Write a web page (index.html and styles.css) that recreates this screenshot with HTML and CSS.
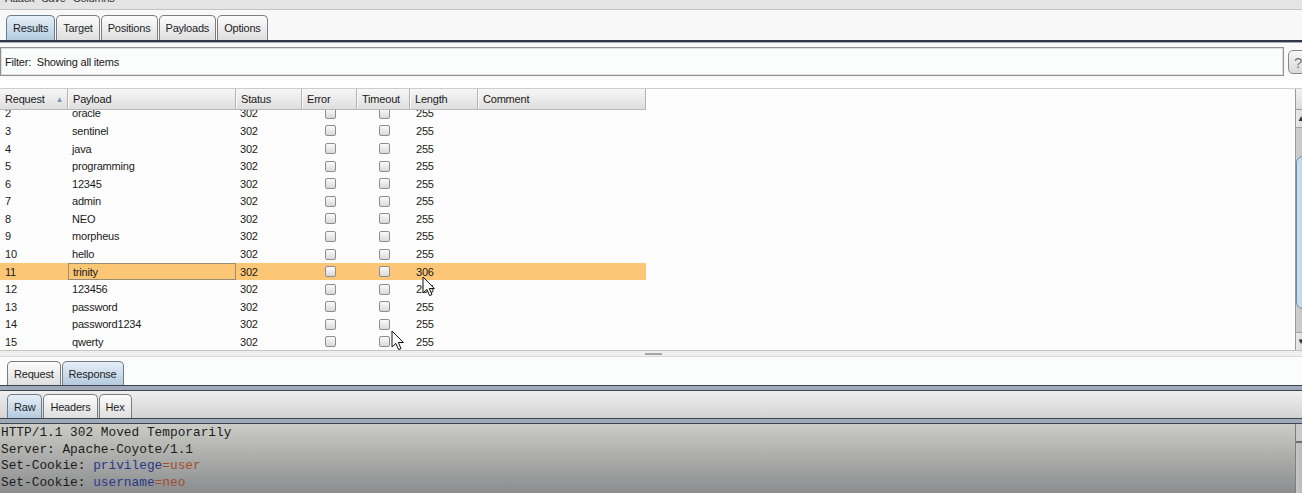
FILE: index.html
```html
<!DOCTYPE html>
<html>
<head>
<meta charset="utf-8">
<title>Intruder attack</title>
<link rel="stylesheet" href="styles.css">
</head>
<body>
<div class="app">
  <div class="menubar">
    <div class="menu-items"><span>Attack</span><span>Save</span><span>Columns</span></div>
  </div>
  <div class="tabbar top">
    <div class="tab sel">Results</div>
    <div class="tab">Target</div>
    <div class="tab">Positions</div>
    <div class="tab">Payloads</div>
    <div class="tab">Options</div>
  </div>
  <div class="sep-top"></div>
  <div class="filterrow">
    <div class="filterbox">Filter:&nbsp; Showing all items</div>
    <div class="help">?</div>
  </div>
  <div class="tablearea">
    <div class="table">
      <div class="thead">
        <div class="th">Request <span class="sort">&#9650;</span></div>
        <div class="th">Payload</div>
        <div class="th">Status</div>
        <div class="th">Error</div>
        <div class="th">Timeout</div>
        <div class="th">Length</div>
        <div class="th">Comment</div>
      </div>
      <div class="tbody">
        <div class="rows">
          <div class="row"><span>2</span><span>oracle</span><span>302</span><span class="cb"><i></i></span><span class="cb"><i></i></span><span>255</span><span></span></div>
          <div class="row"><span>3</span><span>sentinel</span><span>302</span><span class="cb"><i></i></span><span class="cb"><i></i></span><span>255</span><span></span></div>
          <div class="row"><span>4</span><span>java</span><span>302</span><span class="cb"><i></i></span><span class="cb"><i></i></span><span>255</span><span></span></div>
          <div class="row"><span>5</span><span>programming</span><span>302</span><span class="cb"><i></i></span><span class="cb"><i></i></span><span>255</span><span></span></div>
          <div class="row"><span>6</span><span>12345</span><span>302</span><span class="cb"><i></i></span><span class="cb"><i></i></span><span>255</span><span></span></div>
          <div class="row"><span>7</span><span>admin</span><span>302</span><span class="cb"><i></i></span><span class="cb"><i></i></span><span>255</span><span></span></div>
          <div class="row"><span>8</span><span>NEO</span><span>302</span><span class="cb"><i></i></span><span class="cb"><i></i></span><span>255</span><span></span></div>
          <div class="row"><span>9</span><span>morpheus</span><span>302</span><span class="cb"><i></i></span><span class="cb"><i></i></span><span>255</span><span></span></div>
          <div class="row"><span>10</span><span>hello</span><span>302</span><span class="cb"><i></i></span><span class="cb"><i></i></span><span>255</span><span></span></div>
          <div class="row selected"><span>11</span><span class="focus">trinity</span><span>302</span><span class="cb"><i></i></span><span class="cb"><i></i></span><span>306</span><span></span></div>
          <div class="row"><span>12</span><span>123456</span><span>302</span><span class="cb"><i></i></span><span class="cb"><i></i></span><span>255</span><span></span></div>
          <div class="row"><span>13</span><span>password</span><span>302</span><span class="cb"><i></i></span><span class="cb"><i></i></span><span>255</span><span></span></div>
          <div class="row"><span>14</span><span>password1234</span><span>302</span><span class="cb"><i></i></span><span class="cb"><i></i></span><span>255</span><span></span></div>
          <div class="row"><span>15</span><span>qwerty</span><span>302</span><span class="cb"><i></i></span><span class="cb"><i></i></span><span>255</span><span></span></div>
        </div>
      </div>
    </div>
    <div class="vscroll">
      <div class="vs-corner"></div>
      <div class="vs-btn up">&#9650;</div>
      <div class="vs-track"><div class="vs-thumb"></div></div>
      <div class="vs-btn down">&#9660;</div>
    </div>
  </div>
  <div class="splitter"><div class="grip"></div></div>
  <div class="tabbar sub light">
    <div class="tab">Request</div>
    <div class="tab sel">Response</div>
  </div>
  <div class="sep-dbl"></div>
  <div class="tabbar sub grey">
    <div class="tab sel">Raw</div>
    <div class="tab">Headers</div>
    <div class="tab">Hex</div>
  </div>
  <div class="sep-dbl"></div>
  <div class="textarea">
<pre class="raw">HTTP/1.1 302 Moved Temporarily
Server: Apache-Coyote/1.1
Set-Cookie: <span class="k">privilege</span><span class="v">=user</span>
Set-Cookie: <span class="k">username</span><span class="v">=neo</span></pre>
    <div class="vscroll2"><div class="vs2-btn"></div></div>
  </div>

  <svg class="cursor c1" width="14" height="21" viewBox="0 0 14 21"><path d="M1 1 L1 17 L4.8 13.4 L7.6 19.6 L10 18.6 L7.3 12.5 L12.4 12.5 Z" fill="#fff" stroke="#111" stroke-width="1" stroke-linejoin="round"/></svg>
  <svg class="cursor c2" width="14" height="21" viewBox="0 0 14 21"><path d="M1 1 L1 17 L4.8 13.4 L7.6 19.6 L10 18.6 L7.3 12.5 L12.4 12.5 Z" fill="#fff" stroke="#111" stroke-width="1" stroke-linejoin="round"/></svg>
</div>
</body>
</html>
```

FILE: styles.css
```css
* { box-sizing: border-box; }
html, body { margin: 0; padding: 0; overflow: hidden; background: #fff; }
body { width: 1302px; height: 493px; }

.app {
  position: relative;
  width: 1312px;
  height: 493px;
  overflow: hidden;
  display: flex;
  flex-direction: column;
  font-family: "Liberation Sans", Arial, sans-serif;
  font-size: 11px;
  letter-spacing: -0.2px;
  color: #1a1a1a;
}

/* menu bar (clipped at top) */
.menubar {
  height: 10px;
  flex: none;
  background: #e4e4e4;
  border-bottom: 1px solid #c4c4c4;
  overflow: hidden;
}
.menu-items {
  display: flex;
  gap: 7px;
  padding-left: 5px;
  line-height: 12px;
  margin-top: -8px;
  color: #333;
}

/* tab bars */
.tabbar {
  flex: none;
  display: flex;
  align-items: flex-end;
  gap: 1px;
}
.tabbar.top { height: 30px; padding-left: 6px; background: #f8f8f8; }
.tabbar.sub.light { height: 28px; padding-left: 7px; background: #fbfcfc; }
.tabbar.sub.grey { height: 27px; padding-left: 7px; background: linear-gradient(#efefef, #d3d3d3); }

.tab {
  height: 25px;
  padding: 0 6px;
  display: flex;
  align-items: center;
  border: 1px solid #7d7d7d;
  border-bottom: 0;
  border-radius: 5px 5px 0 0;
  background: linear-gradient(#fcfcfc, #dedede);
  color: #1f1f1f;
  white-space: nowrap;
}
.tabbar.sub .tab { height: 24px; }
.tab.sel { background: linear-gradient(#e6eff7, #b3cbdf); border-color: #6f7d8a; }

.sep-top {
  flex: none;
  height: 3px;
  border-top: 2px solid #2f3848;
  background: #a7acb4;
}
.sep-dbl {
  flex: none;
  height: 6px;
  border-top: 1px solid #3d4452;
  border-bottom: 1px solid #3d4452;
  background: #a0a9b8;
}

/* filter */
.filterrow {
  flex: none;
  height: 37px;
  padding-top: 4px;
  display: flex;
  align-items: flex-start;
  gap: 4px;
  background: #fafafa;
}
.filterbox {
  flex: 1;
  height: 29px;
  border: 1px solid #8f8f8f;
  box-shadow: inset 0 0 0 1px #dedede;
  background: #fbfcfc;
  padding-left: 4px;
  display: flex;
  align-items: center;
}
.help {
  width: 24px;
  height: 24px;
  margin-top: 3px;
  border: 1px solid #8a8a8a;
  border-radius: 5px;
  background: linear-gradient(#f7f7f7, #d9d9d9);
  color: #777;
  font-size: 15px;
  padding-left: 5px;
  display: flex;
  align-items: center;
}

/* table */
.tablearea {
  flex: none;
  margin-top: 8px;
  height: 262px;
  display: flex;
  border-top: 1px solid #cdcdcd;
  background: #fdfdfd;
}
.table { flex: 1; display: flex; flex-direction: column; min-width: 0; }
.thead, .row {
  display: grid;
  grid-template-columns: 68px 168px 66px 55px 53px 68px 168px;
  width: 646px;
}
.thead {
  height: 21px;
  flex: none;
  background: linear-gradient(#f7f7f7, #dedede);
  border-bottom: 1px solid #b9b9b9;
}
.th {
  display: flex;
  align-items: center;
  padding-left: 4px;
  border-right: 1px solid #b3b3b3;
  border-left: 1px solid #fafafa;
  white-space: nowrap;
}
.th:first-child { padding-left: 5px; border-left: 0; }
.sort { color: #7e98b3; font-size: 8px; margin-left: 11px; }
.tbody { height: 240px; overflow: hidden; flex: none; }
.rows { margin-top: -5.4px; }
.row { height: 17.58px; align-items: center; }
.row > span { padding-left: 4px; white-space: nowrap; height: 100%; display: flex; align-items: center; }
.row > span:first-child { padding-left: 5px; }
.row > span:nth-child(6) { padding-left: 6px; }
.row .cb { justify-content: center; padding-left: 1px; }
.cb i {
  display: block;
  width: 11px;
  height: 11px;
  border: 1px solid #8e8e8e;
  border-radius: 2px;
  background: linear-gradient(#fbfbfb, #d9d9d9);
}
.row.selected { background: #fbc776; }
.row .focus { border: 1px solid #9c8c73; }

/* scrollbar */
.vscroll { width: 17px; flex: none; display: flex; flex-direction: column; background: #dcdcdc; border-left: 1px solid #9a9a9a; }
.vs-corner { height: 21px; background: linear-gradient(#f2f2f2, #dddddd); border-bottom: 1px solid #9a9a9a; }
.vs-btn { height: 18px; font-size: 8px; color: #333; padding-left: 1px; display: flex; align-items: center; background: linear-gradient(90deg, #e9e9e9, #c9c9c9); }
.vs-btn.up { border-bottom: 1px solid #a3a3a3; }
.vs-btn.down { border-top: 1px solid #a3a3a3; }
.vs-track { flex: 1; padding: 28px 0 23px; background: linear-gradient(90deg, #cfcfcf, #bdbdbd); }
.vs-thumb { height: 100%; border: 1px solid #6e8ca8; border-radius: 7px; background: linear-gradient(90deg, #c9def0, #b3cfe8); }

/* splitter */
.splitter {
  flex: none;
  height: 7px;
  border-top: 1px solid #c4c4c4;
  border-bottom: 1px solid #dadada;
  background: #efefef;
  display: flex;
  align-items: center;
  padding-left: 645px;
}
.grip { width: 17px; height: 2px; background: #a5a5a5; }

/* response */
.textarea {
  flex: 1;
  display: flex;
  background: linear-gradient(#cbccc6 0px, #8b8c8e 69px);
}
.raw {
  flex: 1;
  margin: 0;
  padding: 1px 1px 0;
  font-family: "Liberation Mono", "Courier New", monospace;
  font-size: 12.8px;
  letter-spacing: 0;
  line-height: 16.6px;
  color: #1c1c1c;
}
.raw .k { color: #2b3886; }
.raw .v { color: #9f4f2a; }
.vscroll2 { width: 17px; flex: none; border-left: 1px solid #7e7e7e; background: linear-gradient(90deg, #c6c6c6, #a8a8a8); }
.vs2-btn { height: 19px; border-bottom: 2px solid #6c6c6c; background: #c9cbcb; }

/* mouse pointers over the table */
.cursor { position: absolute; }
.cursor.c1 { left: 422px; top: 276px; }
.cursor.c2 { left: 391px; top: 330px; }
```
